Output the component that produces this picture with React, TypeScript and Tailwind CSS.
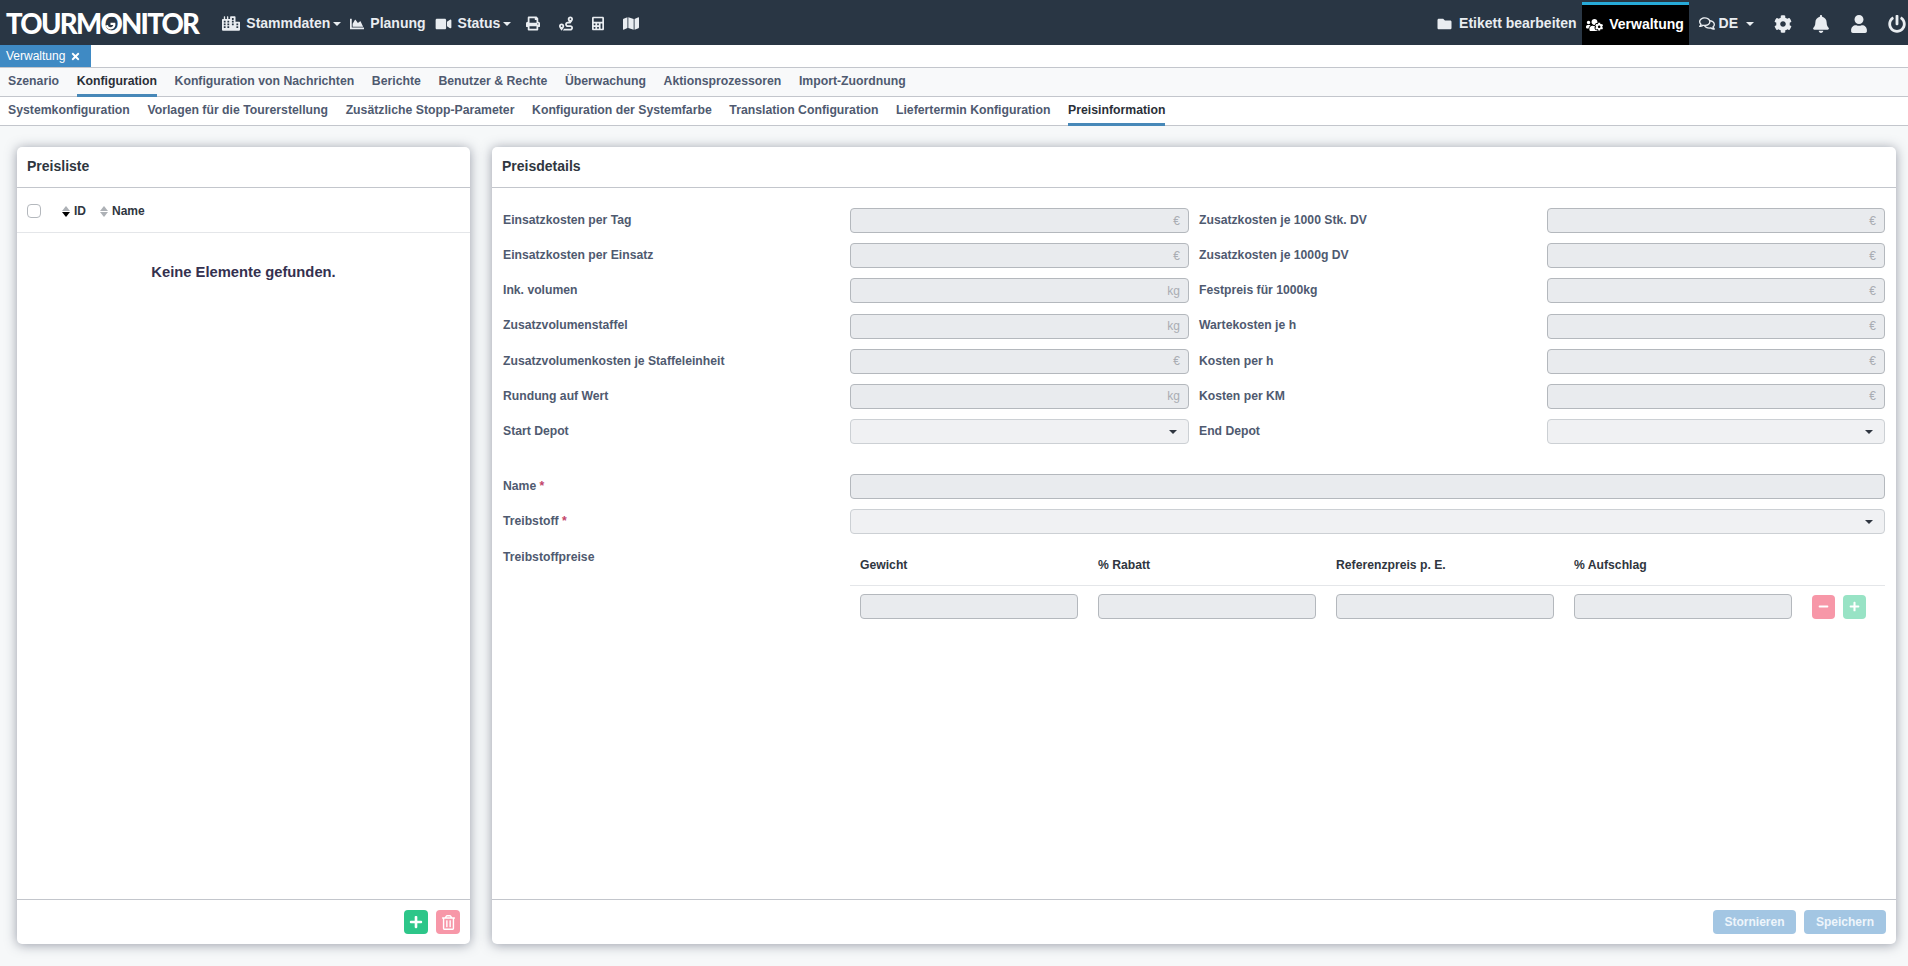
import {
  FaCalculator, FaChartArea, FaCog, FaCity, FaBell, FaFolder, FaMap, FaMinus, FaPlus,
  FaPowerOff, FaPrint, FaRegComments, FaRegTrashAlt, FaRoute, FaTimes, FaUser, FaUsersCog, FaVideo,
} from 'react-icons/fa';
import type { ReactNode } from 'react';

const mainTabs = ['Szenario', 'Konfiguration', 'Konfiguration von Nachrichten', 'Berichte', 'Benutzer & Rechte', 'Überwachung', 'Aktionsprozessoren', 'Import-Zuordnung'];
const subTabs = ['Systemkonfiguration', 'Vorlagen für die Tourerstellung', 'Zusätzliche Stopp-Parameter', 'Konfiguration der Systemfarbe', 'Translation Configuration', 'Liefertermin Konfiguration', 'Preisinformation'];

const priceRows = [
  ['Einsatzkosten per Tag', '€', 'Zusatzkosten je 1000 Stk. DV', '€'],
  ['Einsatzkosten per Einsatz', '€', 'Zusatzkosten je 1000g DV', '€'],
  ['Ink. volumen', 'kg', 'Festpreis für 1000kg', '€'],
  ['Zusatzvolumenstaffel', 'kg', 'Wartekosten je h', '€'],
  ['Zusatzvolumenkosten je Staffeleinheit', '€', 'Kosten per h', '€'],
  ['Rundung auf Wert', 'kg', 'Kosten per KM', '€'],
];

function Caret({ className = '' }: { className?: string }) {
  return <span className={`h-0 w-0 border-x-[4px] border-t-[4px] border-x-transparent border-t-current ${className}`} />;
}

function NavItem({ icon, label, caret }: { icon: ReactNode; label?: string; caret?: boolean }) {
  return (
    <div className="flex items-center gap-[6px] text-[14px] font-bold text-[#e9edf1]">
      {icon}
      {label && <span>{label}</span>}
      {caret && <Caret className="-ml-[3px]" />}
    </div>
  );
}

function Logo() {
  return (
    <div className="ml-[6px] mr-[24px] flex font-['Lato',sans-serif] text-[27.5px] font-black leading-none tracking-[-1.7px] text-white">
      <span>TOURM</span>
      <span className="relative">
        O
        {/* pin-shaped hook inside the O of the logo */}
        <svg viewBox="0 0 20 20" className="absolute left-[3px] top-[7px] h-[15px] w-[15px]">
          <circle cx="10" cy="10" r="6.5" fill="#293644" />
          <path d="M5 11 A5 5 0 0 0 15 9 L10 9" fill="none" stroke="#fff" strokeWidth="3" />
        </svg>
      </span>
      <span>NITOR</span>
    </div>
  );
}

function Header() {
  return (
    <header className="flex h-[45px] items-center bg-[#293644] text-white">
      <div className="flex items-center pt-[2px]">
        <Logo />
        <div className="flex items-center gap-[9px]">
          <NavItem icon={<FaCity className="h-[15px] w-[18px]" />} label="Stammdaten" caret />
          <NavItem icon={<FaChartArea className="h-[14px] w-[14px]" />} label="Planung" />
          <NavItem icon={<FaVideo className="h-[14px] w-[17px]" />} label="Status" caret />
        </div>
        <div className="ml-[15px] flex items-center gap-[19px] text-[#e9edf1]">
          <FaPrint className="h-[15px] w-[14px]" />
          <FaRoute className="h-[15px] w-[14px]" />
          <FaCalculator className="h-[15px] w-[12px]" />
          <FaMap className="h-[15px] w-[16px]" />
        </div>
      </div>
      <div className="ml-auto flex h-full items-center">
        <div className="flex items-center gap-[7px] pt-[2px] text-[14px] font-bold text-[#e9edf1]">
          <FaFolder className="h-[14px] w-[15px]" />
          <span>Etikett bearbeiten</span>
        </div>
        <div className="ml-[5px] mt-[1px] flex h-[43px] w-[107px] items-center justify-center gap-[6px] border-t-[3px] border-[#27aad8] bg-black text-[14px] font-bold">
          <FaUsersCog className="h-[14px] w-[17px]" />
          <span>Verwaltung</span>
        </div>
        <div className="ml-[10px] flex items-center gap-[4px] pt-[2px] text-[14px] font-bold text-[#e9edf1]">
          <FaRegComments className="h-[15px] w-[16px]" />
          <span>DE</span>
          <Caret className="ml-[4px]" />
        </div>
        <div className="ml-[20px] mr-[2px] flex items-center gap-[20px] pt-[2px] text-[#e9edf1]">
          <FaCog className="h-[18px] w-[18px]" />
          <FaBell className="h-[18px] w-[18px]" />
          <FaUser className="h-[18px] w-[18px]" />
          <FaPowerOff className="h-[18px] w-[18px]" />
        </div>
      </div>
    </header>
  );
}

function TabRow({ tabs, active, bg }: { tabs: string[]; active: string; bg: string }) {
  return (
    <nav className={`flex h-[29px] gap-[17.6px] border-b border-[#c3c6cc] px-[8px] text-[12.25px] font-bold ${bg}`}>
      {tabs.map((t) => (
        <div
          key={t}
          className={`flex h-[29px] items-center border-b-[3px] ${t === active ? 'border-[#4788b8] text-[#2a2f38]' : 'border-transparent text-[#4f5a70]'}`}
        >
          {t}
        </div>
      ))}
    </nav>
  );
}

function Card({ title, footer, className, children }: { title: string; footer: ReactNode; className: string; children: ReactNode }) {
  return (
    <section className={`flex h-[797px] flex-col rounded-[5px] bg-white shadow-[0_1px_12px_rgba(60,66,87,0.5)] ${className}`}>
      <h2 className="flex h-[41px] shrink-0 items-center border-b border-[#c3c6cc] px-[10px] pb-[2px] text-[14px] font-bold text-[#2f3640]">{title}</h2>
      <div className="flex-1">{children}</div>
      <div className="flex h-[45px] shrink-0 items-center justify-end gap-[8px] border-t border-[#c3c6cc] px-[10px]">{footer}</div>
    </section>
  );
}

function SortIcon({ active }: { active?: boolean }) {
  return (
    <span className="flex w-[8px] flex-col items-center">
      <span className="h-0 w-0 border-x-[4px] border-b-[5px] border-x-transparent border-b-[#adb1b6]" />
      <span className={`mt-[1px] h-0 w-0 border-x-[4px] border-t-[5px] border-x-transparent ${active ? 'border-t-black' : 'border-t-[#adb1b6]'}`} />
    </span>
  );
}

function Field({ unit, select, className = '' }: { unit?: string; select?: boolean; className?: string }) {
  return (
    <div className={`flex h-[25px] items-center justify-end rounded-[4px] border px-[8px] text-[12px] ${select ? 'border-[#ccd0d4] bg-[#f0f1f3]' : 'border-[#b4b8bd] bg-[#e9ebee]'} ${className}`}>
      {unit && <span className="text-[#a9adb3]">{unit}</span>}
      {select && <span className="mr-[3px] h-0 w-0 border-x-[4px] border-t-[4px] border-x-transparent border-t-[#2f3640]" />}
    </div>
  );
}

function Label({ children, required }: { children: string; required?: boolean }) {
  return (
    <div className="-mt-[1px] text-[12.2px] font-bold text-[#4f5a70]">
      {children}
      {required && <span className="text-[#c2456a]"> *</span>}
    </div>
  );
}

function ActionButton({ color, size, children }: { color: string; size: string; children: ReactNode }) {
  return <button className={`flex h-[24px] items-center justify-center rounded-[4px] text-white ${size} ${color}`}>{children}</button>;
}

function PriceDetails() {
  return (
    <div className="pl-[11px] pr-[11px] pt-[20px]">
      <div className="flex flex-col gap-[10.2px]">
        {priceRows.map((r) => (
          <div key={r[0]} className="grid grid-cols-[347px_339px_358px_1fr] items-center">
            <Label>{r[0]}</Label>
            <Field unit={r[1]} />
            <div className="pl-[10px]"><Label>{r[2]}</Label></div>
            <Field unit={r[3]} />
          </div>
        ))}
        <div className="grid grid-cols-[347px_339px_358px_1fr] items-center">
          <Label>Start Depot</Label>
          <Field select />
          <div className="pl-[10px]"><Label>End Depot</Label></div>
          <Field select />
        </div>
      </div>
      <div className="mt-[30px] grid grid-cols-[347px_1fr] items-center gap-y-[10px]">
        <Label required>Name</Label>
        <Field />
        <Label required>Treibstoff</Label>
        <Field select />
        <div className="self-start pt-[5px]"><Label>Treibstoffpreise</Label></div>
        <div>
          <div className="flex h-[42px] items-center border-b border-[#e4e6e9] pl-[10px] pt-[2px] text-[12.2px] font-bold text-[#2f3640]">
            <div className="w-[238px]">Gewicht</div>
            <div className="w-[238px]">% Rabatt</div>
            <div className="w-[238px]">Referenzpreis p. E.</div>
            <div>% Aufschlag</div>
          </div>
          <div className="flex items-center pl-[10px] pt-[8px]">
            <Field className="w-[218px]" />
            <Field className="ml-[20px] w-[218px]" />
            <Field className="ml-[20px] w-[218px]" />
            <Field className="ml-[20px] w-[218px]" />
            <div className="ml-[20px]"><ActionButton size="w-[23px]" color="bg-[#f797a8]"><FaMinus className="h-[11px] w-[11px]" /></ActionButton></div>
            <div className="ml-[8px]"><ActionButton size="w-[23px]" color="bg-[#98e3c5]"><FaPlus className="h-[11px] w-[11px]" /></ActionButton></div>
          </div>
        </div>
      </div>
    </div>
  );
}

export default function App() {
  return (
    <div className="flex h-[966px] w-[1908px] flex-col overflow-hidden bg-[#f6f8f9] font-['Liberation_Sans',Arial,sans-serif]">
      <Header />
      <div className="h-[23px] border-b border-[#c3c6cc] bg-white">
        <div className="flex h-[22px] w-[91px] items-center gap-[5px] bg-[#3f8ac4] pl-[6px] text-[12px] text-white">
          Verwaltung <FaTimes className="h-[11px] w-[11px]" />
        </div>
      </div>
      <TabRow tabs={mainTabs} active="Konfiguration" bg="bg-[#f8f9fa]" />
      <TabRow tabs={subTabs} active="Preisinformation" bg="bg-white" />
      <main className="flex gap-[22px] pl-[17px] pr-[12px] pt-[21px]">
        <Card
          title="Preisliste"
          className="w-[453px]"
          footer={
            <>
              <ActionButton size="w-[24px]" color="bg-[#2dc689]"><FaPlus className="h-[14px] w-[14px]" /></ActionButton>
              <ActionButton size="w-[24px]" color="bg-[#f797a8]"><FaRegTrashAlt className="h-[15px] w-[15px]" /></ActionButton>
            </>
          }
        >
          <div className="flex h-[45px] items-center border-b border-[#e4e6e9] pl-[10px] pt-[2px] text-[12px] font-bold text-[#2f3640]">
            <span className="h-[14px] w-[14px] rounded-[4px] border border-[#b4b8bd] bg-white" />
            <span className="ml-[21px]"><SortIcon active /></span>
            <span className="ml-[4px]">ID</span>
            <span className="ml-[14px]"><SortIcon /></span>
            <span className="ml-[4px]">Name</span>
          </div>
          <p className="pt-[28px] text-center text-[14.75px] font-bold text-[#34314f]">Keine Elemente gefunden.</p>
        </Card>
        <Card
          title="Preisdetails"
          className="flex-1"
          footer={
            <>
              <button className="h-[24px] w-[83px] rounded-[4px] bg-[#a3c6e3] text-[12px] font-bold text-[#eef5fb]">Stornieren</button>
              <button className="h-[24px] w-[82px] rounded-[4px] bg-[#a3c6e3] text-[12px] font-bold text-[#eef5fb]">Speichern</button>
            </>
          }
        >
          <PriceDetails />
        </Card>
      </main>
    </div>
  );
}
